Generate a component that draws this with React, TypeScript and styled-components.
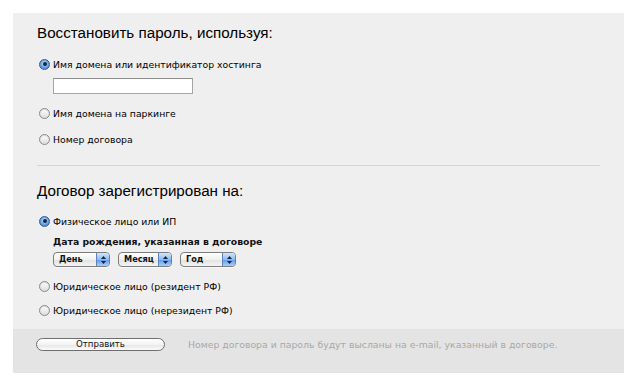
import React, { useState } from 'react';
import styled, { createGlobalStyle } from 'styled-components';

const GlobalStyle = createGlobalStyle`
  html, body {
    margin: 0;
    padding: 0;
    background: #fff;
  }
  body {
    font-family: "DejaVu Sans", Verdana, sans-serif;
  }
`;

const Page = styled.div`
  padding: 13px 15px 15px 13px;
`;

const Panel = styled.form`
  width: 611px;
  background: #efefef;
  display: flex;
  flex-direction: column;
`;

const Body = styled.div`
  padding: 12px 24px 12px 24px;
  display: flex;
  flex-direction: column;
`;

const Heading = styled.h2<{ $top?: number }>`
  margin: ${p => p.$top || 0}px 0 0 0;
  font-family: "Liberation Sans", Arial, sans-serif;
  font-weight: normal;
  font-size: 15.2px;
  line-height: 16px;
  color: #000;
`;

const Options = styled.div`
  display: flex;
  flex-direction: column;
  padding-left: 2px;
`;

const OptionRow = styled.label<{ $gap: number }>`
  display: flex;
  align-items: center;
  gap: 3px;
  height: 14px;
  margin-top: ${p => p.$gap}px;
  font-size: 9.3px;
  color: #000;
  cursor: pointer;
`;

const RadioDot = styled.span<{ $on: boolean }>`
  width: 9px;
  height: 9px;
  border-radius: 50%;
  flex: none;
  position: relative;
  border: 1px solid ${p => (p.$on ? '#2f5d9a' : '#8a8a8a')};
  background: ${p =>
    p.$on
      ? 'radial-gradient(circle at 50% 35%, #cfe4fb 0%, #6fa4e3 55%, #3a75c4 100%)'
      : 'linear-gradient(#ffffff, #dcdcdc)'};
  box-shadow: inset 0 1px 1px rgba(0,0,0,0.15);
  &::after {
    content: '';
    display: ${p => (p.$on ? 'block' : 'none')};
    position: absolute;
    left: 2.5px;
    top: 2.5px;
    width: 4px;
    height: 4px;
    border-radius: 50%;
    background: #10264a;
  }
`;

const TextField = styled.input`
  margin: 7px 0 0 14px;
  width: 140px;
  height: 16px;
  box-sizing: border-box;
  border: 1px solid #a5a5a5;
  border-top-color: #8e8e8e;
  background: #fff;
  padding: 0 3px;
  font-size: 10px;
  outline: none;
`;

const Divider = styled.hr`
  margin: 19px 0 0 0;
  width: 563px;
  border: none;
  border-top: 1px solid #d4d4d4;
`;

const SubBlock = styled.div`
  display: flex;
  flex-direction: column;
  padding-left: 14px;
`;

const SubLabel = styled.div`
  margin-top: 8px;
  font-size: 9.3px;
  font-weight: bold;
  color: #111;
  line-height: 12px;
`;

const SelectRow = styled.div`
  display: flex;
  gap: 8px;
  margin-top: 4px;
`;

const SelectBox = styled.div<{ $w: number }>`
  width: ${p => p.$w}px;
  height: 15px;
  box-sizing: border-box;
  border: 1px solid #7d7d7d;
  border-radius: 4px;
  display: flex;
  overflow: hidden;
  background: linear-gradient(#ffffff, #f0f0f0 50%, #e2e2e2 51%, #f4f4f4);
  box-shadow: 0 1px 0 rgba(255,255,255,0.6);
`;

const SelectText = styled.span`
  flex: 1;
  font-size: 8.2px;
  font-weight: bold;
  line-height: 13px;
  padding-left: 5px;
  color: #111;
  white-space: nowrap;
`;

const SelectArrows = styled.span`
  width: 12px;
  flex: none;
  border-left: 1px solid #5a83bf;
  background: linear-gradient(#d4e6fb, #8fbbef 50%, #5f98e3 51%, #a8d0fa);
  display: flex;
  align-items: center;
  justify-content: center;
`;

const Footer = styled.div`
  background: #e4e4e4;
  height: 44px;
  display: flex;
  align-items: flex-start;
  padding: 9px 0 0 23px;
  box-sizing: border-box;
  gap: 23px;
`;

const SubmitButton = styled.button`
  width: 129px;
  height: 13px;
  border: 1px solid #6e6e6e;
  border-radius: 7px;
  background: linear-gradient(#ffffff, #f3f3f3 50%, #e6e6e6 51%, #fbfbfb);
  font-family: "DejaVu Sans", Verdana, sans-serif;
  font-size: 8.6px;
  line-height: 11px;
  padding: 0;
  color: #111;
  cursor: pointer;
`;

const Note = styled.span`
  font-size: 9.3px;
  line-height: 13px;
  color: #a8a8a8;
`;

const Arrows = () => (
  <svg width="5" height="8" viewBox="0 0 5 8">
    <path d="M2.5 0 L5 3 L0 3 Z" fill="#10264a" />
    <path d="M2.5 8 L5 5 L0 5 Z" fill="#10264a" />
  </svg>
);

const Select = ({ label, width }: { label: string; width: number }) => (
  <SelectBox $w={width}>
    <SelectText>{label}</SelectText>
    <SelectArrows>
      <Arrows />
    </SelectArrows>
  </SelectBox>
);

const Radio = ({ on, label, gap, onPick }: { on: boolean; label: string; gap: number; onPick: () => void }) => (
  <OptionRow $gap={gap} onClick={onPick}>
    <RadioDot $on={on} />
    {label}
  </OptionRow>
);

const App = () => {
  const [method, setMethod] = useState(0);
  const [owner, setOwner] = useState(0);

  return (
    <Page>
      <GlobalStyle />
      <Panel onSubmit={e => e.preventDefault()}>
        <Body>
          <Heading>Восстановить пароль, используя:</Heading>
          <Options>
            <Radio gap={16} on={method === 0} label="Имя домена или идентификатор хостинга" onPick={() => setMethod(0)} />
            <TextField type="text" />
            <Radio gap={12} on={method === 1} label="Имя домена на паркинге" onPick={() => setMethod(1)} />
            <Radio gap={12} on={method === 2} label="Номер договора" onPick={() => setMethod(2)} />
          </Options>
          <Divider />
          <Heading $top={17}>Договор зарегистрирован на:</Heading>
          <Options>
            <Radio gap={15} on={owner === 0} label="Физическое лицо или ИП" onPick={() => setOwner(0)} />
            <SubBlock>
              <SubLabel>Дата рождения, указанная в договоре</SubLabel>
              <SelectRow>
                <Select label="День" width={57} />
                <Select label="Месяц" width={54} />
                <Select label="Год" width={56} />
              </SelectRow>
            </SubBlock>
            <Radio gap={12} on={owner === 1} label="Юридическое лицо (резидент РФ)" onPick={() => setOwner(1)} />
            <Radio gap={10} on={owner === 2} label="Юридическое лицо (нерезидент РФ)" onPick={() => setOwner(2)} />
          </Options>
        </Body>
        <Footer>
          <SubmitButton type="submit">Отправить</SubmitButton>
          <Note>Номер договора и пароль будут высланы на e-mail, указанный в договоре.</Note>
        </Footer>
      </Panel>
    </Page>
  );
};

export default App;
